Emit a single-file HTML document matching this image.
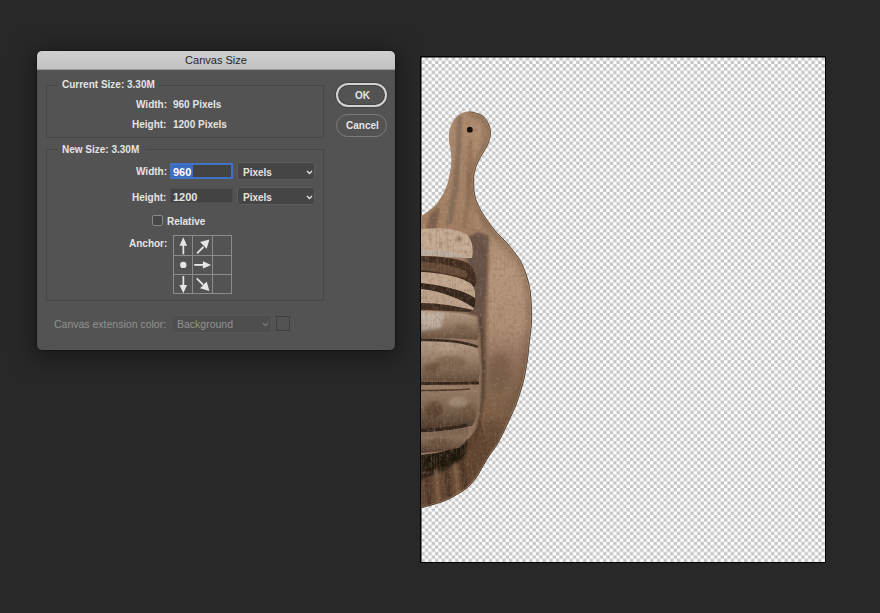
<!DOCTYPE html>
<html><head><meta charset="utf-8">
<style>
*{margin:0;padding:0;box-sizing:border-box}
html,body{width:880px;height:613px;overflow:hidden;background:#282828;font-family:"Liberation Sans",sans-serif}
.abs{position:absolute}
#dlg{position:absolute;left:36px;top:50px;width:360px;height:301px;border-radius:6px;background:#535353;border:1px solid #161616;overflow:hidden;box-shadow:0 4px 24px rgba(0,0,0,.5)}
#title{position:absolute;left:0;top:0;width:100%;height:19px;background:linear-gradient(#cfcfcf,#c2c2c2);border-bottom:1px solid #9c9c9c;color:#262626;font-size:11px;text-align:center;line-height:19px}
.grp{position:absolute;border:1px solid #474747}
.lbl{position:absolute;color:#e4e4e4;font-size:10px;font-weight:bold;white-space:nowrap;line-height:12px}
.inp{position:absolute;background:#434343;border:1px solid #4d4d4d}
.dd{position:absolute;background:#454545;border:1px solid #5c5c5c;border-radius:3px}
.chev{position:absolute;width:7px;height:5px}
</style></head><body>

<div id="dlg">
  <div id="title">Canvas Size</div>
</div>

<!-- Current size group -->
<div class="grp" style="left:46px;top:85px;width:278px;height:53px"></div>
<div class="abs" style="left:57px;top:79px;width:102px;height:12px;background:#535353"></div>
<div class="lbl" style="left:62px;top:79px">Current Size: 3.30M</div>
<div class="lbl" style="left:136px;top:99px">Width:</div>
<div class="lbl" style="left:173px;top:99px">960 Pixels</div>
<div class="lbl" style="left:132px;top:119px">Height:</div>
<div class="lbl" style="left:173px;top:119px">1200 Pixels</div>

<!-- New size group -->
<div class="grp" style="left:46px;top:149px;width:278px;height:152px"></div>
<div class="abs" style="left:57px;top:143px;width:89px;height:12px;background:#535353"></div>
<div class="lbl" style="left:62px;top:144px">New Size: 3.30M</div>

<div class="lbl" style="left:136px;top:166px">Width:</div>
<div class="inp" style="left:170px;top:163px;width:63px;height:16px;border:2px solid #3f72c6"></div>
<div class="abs" style="left:172px;top:165px;width:21px;height:12px;background:#3b6cbf"></div>
<div class="lbl" style="left:173px;top:166px;color:#fff;font-size:11px">960</div>
<div class="dd" style="left:237px;top:162px;width:78px;height:18px"></div>
<div class="lbl" style="left:243px;top:167px">Pixels</div>
<svg class="chev" style="left:305.5px;top:169.5px" viewBox="0 0 7 5"><path d="M1 1L3.5 3.6L6 1" fill="none" stroke="#e0e0e0" stroke-width="1.4"/></svg>

<div class="lbl" style="left:132px;top:192px">Height:</div>
<div class="inp" style="left:170px;top:188px;width:63px;height:15px"></div>
<div class="lbl" style="left:173px;top:191px;font-size:11px">1200</div>
<div class="dd" style="left:237px;top:187px;width:78px;height:18px"></div>
<div class="lbl" style="left:243px;top:192px">Pixels</div>
<svg class="chev" style="left:305.5px;top:194.5px" viewBox="0 0 7 5"><path d="M1 1L3.5 3.6L6 1" fill="none" stroke="#e0e0e0" stroke-width="1.4"/></svg>

<div class="abs" style="left:152px;top:215px;width:11px;height:11px;border:1px solid #888;border-radius:2px;background:#474747"></div>
<div class="lbl" style="left:167px;top:216px">Relative</div>
<div class="lbl" style="left:129px;top:238px">Anchor:</div>

<svg class="abs" style="left:170px;top:232px" width="66" height="66" viewBox="0 0 66 66">
  <g stroke="#8c8c8c" stroke-width="1" fill="none">
    <rect x="3.5" y="3.5" width="58" height="58"/>
    <line x1="22.5" y1="3.5" x2="22.5" y2="61.5"/>
    <line x1="42.5" y1="3.5" x2="42.5" y2="61.5"/>
    <line x1="3.5" y1="23.5" x2="61.5" y2="23.5"/>
    <line x1="3.5" y1="42.5" x2="61.5" y2="42.5"/>
  </g>
  <g fill="#e6e6e6" stroke="none">
    <!-- up -->
    <path d="M13.3 5.3L9.5 13.8H17.1Z"/><rect x="12.5" y="13" width="1.7" height="9.3"/>
    <!-- dot -->
    <circle cx="13.3" cy="32.9" r="3.2"/>
    <!-- right -->
    <path d="M41.1 32.9L32.9 29.2V36.6Z"/><rect x="24.2" y="32" width="9.5" height="1.8"/>
    <!-- down -->
    <path d="M13.3 61.3L9.5 52.9H17.1Z"/><rect x="12.5" y="44" width="1.7" height="9.5"/>
    <!-- up-right -->
    <path d="M39.4 7.4L36.7 16.7L30.1 10.1Z"/><path d="M26.4 20.7L32.9 14.2L34.2 15.5L27.7 22Z"/>
    <!-- down-right -->
    <path d="M39.4 58.9L30.1 56.2L36.7 49.6Z"/><path d="M27.4 45.7L33.9 52.2L32.6 53.5L26.1 47Z"/>
  </g>
</svg>

<div class="lbl" style="left:54px;top:318px;color:#929292;font-weight:normal;font-size:10.5px">Canvas extension color:</div>
<div class="dd" style="left:171px;top:315px;width:101px;height:18px;background:#4e4e4e;border-color:#575757"></div>
<div class="lbl" style="left:177px;top:318px;color:#929292;font-weight:normal;font-size:10.5px">Background</div>
<svg class="chev" style="left:262px;top:322px" viewBox="0 0 7 5"><path d="M1 1L3.5 3.6L6 1" fill="none" stroke="#7a7a7a" stroke-width="1.2"/></svg>
<div class="abs" style="left:276px;top:316px;width:14px;height:15px;border:1px solid #3f3f3f"></div>

<div class="abs" style="left:336px;top:83px;width:51px;height:24px;border:2px solid #d2d2d2;border-radius:12px;box-shadow:0 0 0 1px #444, inset 0 0 0 1px #444"></div>
<div class="lbl" style="left:355px;top:90px">OK</div>
<div class="abs" style="left:336px;top:114px;width:51px;height:23px;border:1px solid #7c7c7c;border-radius:12px"></div>
<div class="lbl" style="left:346px;top:120px">Cancel</div>

<svg class="abs" style="left:0;top:0;filter:saturate(1.25)" width="880" height="613" viewBox="0 0 880 613">
<defs>
<pattern id="chkp" x="421.63" y="57.3" width="6.72" height="6.73" patternUnits="userSpaceOnUse"><rect width="6.72" height="6.73" fill="#fff"/><rect x="3.36" width="3.36" height="3.365" fill="#c6c6c6"/><rect y="3.365" width="3.36" height="3.365" fill="#c6c6c6"/></pattern>
<clipPath id="cv"><rect x="421" y="57" width="404" height="505"/></clipPath>
<clipPath id="bd"><path d="M469.5 111.5C471.6 112.2 478.8 113.3 482.0 115.5C485.2 117.7 487.5 121.4 488.9 124.6C490.3 127.8 490.5 131.2 490.4 134.4C490.2 137.6 489.2 140.9 488.0 144.0C486.8 147.1 484.8 149.8 483.0 153.0C481.2 156.2 479.0 159.3 477.5 163.0C476.0 166.7 474.6 171.2 474.0 175.0C473.4 178.8 473.6 182.3 473.8 186.0C474.0 189.7 474.3 193.5 475.2 197.0C476.1 200.5 477.4 203.7 479.0 207.0C480.6 210.3 482.8 213.7 485.0 217.0C487.2 220.3 489.5 223.8 492.0 227.0C494.5 230.2 497.3 233.2 500.0 236.0C502.7 238.8 505.5 241.2 508.0 244.0C510.5 246.8 512.8 250.0 515.0 253.0C517.2 256.0 519.0 258.0 521.0 262.0C523.0 266.0 525.4 271.8 527.0 277.0C528.6 282.2 529.8 287.5 530.5 293.0C531.2 298.5 531.4 304.7 531.5 310.0C531.6 315.3 531.8 319.7 531.4 325.0C531.0 330.3 530.1 335.7 529.4 342.0C528.7 348.3 528.1 356.2 527.0 363.0C525.9 369.8 524.7 376.5 523.0 383.0C521.3 389.5 518.8 396.8 517.0 402.0C515.2 407.2 513.9 409.7 512.0 414.0C510.1 418.3 507.8 423.2 505.5 428.0C503.2 432.8 500.8 438.3 498.0 443.0C495.2 447.7 491.5 452.2 489.0 456.0C486.5 459.8 485.2 462.3 483.0 466.0C480.8 469.7 478.5 474.5 476.0 478.0C473.5 481.5 471.0 484.3 468.0 487.0C465.0 489.7 462.2 491.6 458.0 494.0C453.8 496.4 449.2 499.2 443.0 501.5C436.8 503.8 424.7 506.9 421.0 508.0L410 512L410 214L421 216C422.4 215.0 426.8 212.6 429.7 210.2C432.6 207.8 436.1 204.6 438.5 201.4C440.9 198.2 442.7 194.7 444.4 191.1C446.1 187.5 447.4 184.8 448.5 180.0C449.6 175.2 451.0 167.0 451.3 162.0C451.6 157.0 450.9 153.8 450.5 150.0C450.1 146.2 449.1 142.7 449.0 139.0C448.9 135.3 449.0 131.4 450.0 128.0C451.0 124.6 453.0 121.0 455.0 118.5C457.0 116.0 459.6 114.2 462.0 113.0C464.4 111.8 468.2 111.8 469.5 111.5Z"/></clipPath>
<linearGradient id="gboard" x1="0" y1="0" x2="0" y2="1">
<stop offset="0" stop-color="#ab8e76"/><stop offset="0.3" stop-color="#9c806a"/><stop offset="0.75" stop-color="#7a604c"/><stop offset="1" stop-color="#6a5240"/></linearGradient>
<linearGradient id="gright" x1="0" y1="0" x2="0" y2="1">
<stop offset="0" stop-color="#9c826c"/><stop offset="0.08" stop-color="#aa907b"/><stop offset="0.16" stop-color="#b29884"/><stop offset="0.36" stop-color="#a98f7b"/><stop offset="0.46" stop-color="#8e7464"/><stop offset="0.56" stop-color="#7e6854"/><stop offset="0.7" stop-color="#725a46"/><stop offset="0.85" stop-color="#644e3e"/><stop offset="1" stop-color="#584434"/></linearGradient>
<linearGradient id="gedge" x1="0" y1="0" x2="1" y2="0">
<stop offset="0" stop-color="#4e3c2f" stop-opacity="0"/><stop offset="1" stop-color="#4e3c2f" stop-opacity="0.7"/></linearGradient>
<linearGradient id="gloaf" x1="0" y1="0" x2="0" y2="1">
<stop offset="0" stop-color="#a89280"/><stop offset="0.5" stop-color="#917a68"/><stop offset="1" stop-color="#8a7362"/></linearGradient>
<filter id="nz1" x="0" y="0" width="100%" height="100%"><feTurbulence type="fractalNoise" baseFrequency="0.28" numOctaves="3" seed="4"/><feColorMatrix values="0 0 0 0 0.22  0 0 0 0 0.15  0 0 0 0 0.1  2.6 0 0 0 -1.3"/></filter>
<filter id="nz2" x="0" y="0" width="100%" height="100%"><feTurbulence type="fractalNoise" baseFrequency="0.3" numOctaves="3" seed="9"/><feColorMatrix values="0 0 0 0 0.86  0 0 0 0 0.76  0 0 0 0 0.66  2.6 0 0 0 -1.45"/></filter>
<filter id="nzg" x="0" y="0" width="100%" height="100%"><feTurbulence type="fractalNoise" baseFrequency="0.9 0.04" numOctaves="2" seed="2"/><feColorMatrix values="0 0 0 0 0.25  0 0 0 0 0.18  0 0 0 0 0.13  2.6 0 0 0 -1.3"/></filter>
<linearGradient id="gseg" x1="0" y1="0" x2="0" y2="1"><stop offset="0" stop-color="#b3a08f"/><stop offset="0.45" stop-color="#94806f"/><stop offset="1" stop-color="#5e4a3b"/></linearGradient>
<linearGradient id="gseg2" x1="0" y1="0" x2="0" y2="1"><stop offset="0" stop-color="#988270"/><stop offset="0.5" stop-color="#786655"/><stop offset="1" stop-color="#46362a"/></linearGradient>
<linearGradient id="gseg3" x1="0" y1="0" x2="0" y2="1"><stop offset="0" stop-color="#6e5e52"/><stop offset="0.4" stop-color="#85705e"/><stop offset="1" stop-color="#4a3a30"/></linearGradient>
<filter id="bl1" x="-20%" y="-20%" width="140%" height="140%"><feGaussianBlur stdDeviation="1.5"/></filter>
<filter id="bl3" x="-30%" y="-30%" width="160%" height="160%"><feGaussianBlur stdDeviation="3"/></filter>

</defs>
<rect x="420" y="56" width="406" height="507" fill="#000"/>
<rect x="421.5" y="57.5" width="403.5" height="504.5" fill="url(#chkp)"/>
<g clip-path="url(#cv)"><g clip-path="url(#bd)">
<rect x="415" y="105" width="125" height="410" fill="url(#gboard)"/>
<g filter="url(#bl1)">
<path d="M457 116L462 116L461 150L458 190L452 222L446 226L452 190L456 150Z" fill="#6a5e54" opacity="0.6"/>
<path d="M468 140L472 140L470 200L466 228L462 228L466 200Z" fill="#7a6250" opacity="0.5"/>
<path d="M476 118L482 125L480 160L478 200L482 228L476 228L472 200L474 160Z" fill="#b0957e" opacity="0.55"/>
<path d="M430 214L440 206L436 232L426 232Z" fill="#5a473a" opacity="0.6"/>
</g>
<g filter="url(#bl1)">
<path d="M479 222L545 222L545 515L468 515L484 440L488 330L489 250Z" fill="url(#gright)"/>
</g>
<path d="M469.5 111.5C471.6 112.2 478.8 113.3 482.0 115.5C485.2 117.7 487.5 121.4 488.9 124.6C490.3 127.8 490.5 131.2 490.4 134.4C490.2 137.6 489.2 140.9 488.0 144.0C486.8 147.1 484.8 149.8 483.0 153.0C481.2 156.2 479.0 159.3 477.5 163.0C476.0 166.7 474.6 171.2 474.0 175.0C473.4 178.8 473.6 182.3 473.8 186.0C474.0 189.7 474.3 193.5 475.2 197.0C476.1 200.5 477.4 203.7 479.0 207.0C480.6 210.3 482.8 213.7 485.0 217.0C487.2 220.3 489.5 223.8 492.0 227.0C494.5 230.2 497.3 233.2 500.0 236.0C502.7 238.8 505.5 241.2 508.0 244.0C510.5 246.8 512.8 250.0 515.0 253.0C517.2 256.0 519.0 258.0 521.0 262.0C523.0 266.0 525.4 271.8 527.0 277.0C528.6 282.2 529.8 287.5 530.5 293.0C531.2 298.5 531.4 304.7 531.5 310.0C531.6 315.3 531.8 319.7 531.4 325.0C531.0 330.3 530.1 335.7 529.4 342.0C528.7 348.3 528.1 356.2 527.0 363.0C525.9 369.8 524.7 376.5 523.0 383.0C521.3 389.5 518.8 396.8 517.0 402.0C515.2 407.2 513.9 409.7 512.0 414.0C510.1 418.3 507.8 423.2 505.5 428.0C503.2 432.8 500.8 438.3 498.0 443.0C495.2 447.7 491.5 452.2 489.0 456.0C486.5 459.8 485.2 462.3 483.0 466.0C480.8 469.7 478.5 474.5 476.0 478.0C473.5 481.5 471.0 484.3 468.0 487.0C465.0 489.7 462.2 491.6 458.0 494.0C453.8 496.4 449.2 499.2 443.0 501.5C436.8 503.8 424.7 506.9 421.0 508.0" fill="none" stroke="#4e3c2f" stroke-width="9" opacity="0.35" filter="url(#bl3)"/>
<g filter="url(#bl3)"><ellipse cx="500" cy="372" rx="12" ry="20" fill="#5e4a3a" opacity="0.45"/>
<path d="M484 420L500 420L495 470L478 480Z" fill="#4e3c2f" opacity="0.5"/></g>
<path d="M466 238L478 232L489 236L487 280L485 320L484 400L474 400L468 300Z" fill="#5e5046" opacity="0.95" filter="url(#bl1)"/>
<path d="M421 445L480 420L493 462L462 492L421 512Z" fill="#5a4434"/>
<g filter="url(#bl1)">
<path d="M421 451C440 451 455 448 468 440L464 458C450 468 438 474 421 480Z" fill="#1c1511"/>
<path d="M427 470L430 508M446 466L450 504M462 460L466 496" stroke="#3c2c22" stroke-width="3"/>
<path d="M436 470L439 506M455 464L459 500" stroke="#7e644e" stroke-width="3.4"/>
</g>
<path d="M421 229C440 227 458 229 466 234C472 239 474 248 472 258C460 258 440 256 421 256Z" fill="#c2ad9a"/>
<g filter="url(#bl1)"><circle cx="459" cy="239" r="1.8" fill="#4a3a2e"/><circle cx="441" cy="243" r="1.2" fill="#6a5646"/><circle cx="430" cy="236" r="1" fill="#6a5646"/><circle cx="450" cy="247" r="1" fill="#6a5646"/></g>
<path d="M421 249C435 249 450 251 466 255L471 258C455 258 440 256 421 256Z" fill="#b0b2b4" opacity="0.35"/>
<path d="M421 256C440 256 458 259 466 262C472 266 476 272 476.5 280C476.5 284 475 287 473.7 287C468 280 455 275 421 272Z" fill="#3b2b21"/>
<path d="M421 262C438 262 455 266 465 271C468 274 468 277 466 278C455 275 440 272 421 270Z" fill="#5f4a3a"/>
<path d="M421 272C445 273 462 278 470 283C474 286 476 292 474.8 298C465 291 448 286.5 421 283Z" fill="#bea995"/>
<path d="M421 283C448 286.5 465 291 474.8 298C476 302 475 306 473.7 308C462 300 445 292 421 289Z" fill="#30241c"/>
<path d="M421 289C445 292 462 300 473.7 308C474 309 473 310 472.5 310C455 306 440 304 421 304Z" fill="#b9a491"/>
<path d="M421 303C440 303 455 306 472.5 310L470 312C455 311.5 440 311 421 311Z" fill="#3a2b21"/>
<path d="M421 310C445 310 465 312 478 316C481.5 330 482 360 482 380C481.5 400 480 415 478 425C472 440 455 452 421 455Z" fill="#8e7766"/>
<path d="M421 311C445 311 466 313 477 318C480 325 480 333 477 340C460 338 440 338 421 339Z" fill="url(#gseg)"/>
<path d="M421 341C445 340 465 342 477 347C481 358 481 372 478 382C460 381 440 381 421 382Z" fill="url(#gseg)"/>
<path d="M421 386C445 385 462 386 476 390C479 402 478 418 472 426C455 428 440 429 421 429Z" fill="url(#gseg2)"/>
<path d="M421 433C440 432 455 430 468 428C470 435 466 444 458 448C445 451 435 452 421 453Z" fill="url(#gseg3)"/>
<g filter="url(#bl1)">
<path d="M421 313L444 313L441 328L421 331Z" fill="#d2cbc6" opacity="0.6"/>
<ellipse cx="450" cy="362" rx="16" ry="6" fill="#6a5545" opacity="0.55"/>
<ellipse cx="434" cy="410" rx="9" ry="9" fill="#4e3c2f" opacity="0.7"/>
<ellipse cx="458" cy="402" rx="10" ry="5" fill="#b3a496" opacity="0.5"/>
<ellipse cx="440" cy="442" rx="12" ry="4" fill="#5a4738" opacity="0.6"/>
<ellipse cx="432" cy="368" rx="8" ry="5" fill="#4e3c2f" opacity="0.5"/>
<ellipse cx="462" cy="328" rx="9" ry="4" fill="#6a5545" opacity="0.5"/>
<ellipse cx="468" cy="412" rx="6" ry="8" fill="#5a4636" opacity="0.45"/>
<ellipse cx="448" cy="350" rx="10" ry="3" fill="#c0b0a0" opacity="0.35"/>
</g>
<path d="M479 318C483 340 484 370 483 390C482 410 479 430 470 446" stroke="#4e3c30" stroke-width="3.5" fill="none" opacity="0.8" filter="url(#bl1)"/>
<path d="M421 340C445 339.5 465 342 478 347" stroke="#33261d" stroke-width="2.6" fill="none"/>
<path d="M421 383.5C440 383 460 383 479 383" stroke="#2e221b" stroke-width="3.2" fill="none"/>
<path d="M421 390.5C440 390.5 455 390 470 389" stroke="#4a382b" stroke-width="1.4" fill="none"/>
<path d="M421 430.5C440 430 455 428 468 425" stroke="#2e221b" stroke-width="3.4" fill="none"/>
<rect x="421" y="105" width="115" height="410" filter="url(#nzg)" opacity="0.35"/>
<rect x="421" y="105" width="115" height="410" filter="url(#nz1)" opacity="0.45"/>
<rect x="421" y="105" width="115" height="410" filter="url(#nz2)" opacity="0.18"/>
<circle cx="469.8" cy="129.7" r="2.9" fill="#141010"/>
<path d="M469.5 111.5C471.6 112.2 478.8 113.3 482.0 115.5C485.2 117.7 487.5 121.4 488.9 124.6C490.3 127.8 490.5 131.2 490.4 134.4C490.2 137.6 489.2 140.9 488.0 144.0C486.8 147.1 484.8 149.8 483.0 153.0C481.2 156.2 479.0 159.3 477.5 163.0C476.0 166.7 474.6 171.2 474.0 175.0C473.4 178.8 473.6 182.3 473.8 186.0C474.0 189.7 474.3 193.5 475.2 197.0C476.1 200.5 477.4 203.7 479.0 207.0C480.6 210.3 482.8 213.7 485.0 217.0C487.2 220.3 489.5 223.8 492.0 227.0C494.5 230.2 497.3 233.2 500.0 236.0C502.7 238.8 505.5 241.2 508.0 244.0C510.5 246.8 512.8 250.0 515.0 253.0C517.2 256.0 519.0 258.0 521.0 262.0C523.0 266.0 525.4 271.8 527.0 277.0C528.6 282.2 529.8 287.5 530.5 293.0C531.2 298.5 531.4 304.7 531.5 310.0C531.6 315.3 531.8 319.7 531.4 325.0C531.0 330.3 530.1 335.7 529.4 342.0C528.7 348.3 528.1 356.2 527.0 363.0C525.9 369.8 524.7 376.5 523.0 383.0C521.3 389.5 518.8 396.8 517.0 402.0C515.2 407.2 513.9 409.7 512.0 414.0C510.1 418.3 507.8 423.2 505.5 428.0C503.2 432.8 500.8 438.3 498.0 443.0C495.2 447.7 491.5 452.2 489.0 456.0C486.5 459.8 485.2 462.3 483.0 466.0C480.8 469.7 478.5 474.5 476.0 478.0C473.5 481.5 471.0 484.3 468.0 487.0C465.0 489.7 462.2 491.6 458.0 494.0C453.8 496.4 449.2 499.2 443.0 501.5C436.8 503.8 424.7 506.9 421.0 508.0" fill="none" stroke="#c8ab92" stroke-width="2.2" opacity="0.45"/>
</g>
<path d="M469.5 111.5C471.6 112.2 478.8 113.3 482.0 115.5C485.2 117.7 487.5 121.4 488.9 124.6C490.3 127.8 490.5 131.2 490.4 134.4C490.2 137.6 489.2 140.9 488.0 144.0C486.8 147.1 484.8 149.8 483.0 153.0C481.2 156.2 479.0 159.3 477.5 163.0C476.0 166.7 474.6 171.2 474.0 175.0C473.4 178.8 473.6 182.3 473.8 186.0C474.0 189.7 474.3 193.5 475.2 197.0C476.1 200.5 477.4 203.7 479.0 207.0C480.6 210.3 482.8 213.7 485.0 217.0C487.2 220.3 489.5 223.8 492.0 227.0C494.5 230.2 497.3 233.2 500.0 236.0C502.7 238.8 505.5 241.2 508.0 244.0C510.5 246.8 512.8 250.0 515.0 253.0C517.2 256.0 519.0 258.0 521.0 262.0C523.0 266.0 525.4 271.8 527.0 277.0C528.6 282.2 529.8 287.5 530.5 293.0C531.2 298.5 531.4 304.7 531.5 310.0C531.6 315.3 531.8 319.7 531.4 325.0C531.0 330.3 530.1 335.7 529.4 342.0C528.7 348.3 528.1 356.2 527.0 363.0C525.9 369.8 524.7 376.5 523.0 383.0C521.3 389.5 518.8 396.8 517.0 402.0C515.2 407.2 513.9 409.7 512.0 414.0C510.1 418.3 507.8 423.2 505.5 428.0C503.2 432.8 500.8 438.3 498.0 443.0C495.2 447.7 491.5 452.2 489.0 456.0C486.5 459.8 485.2 462.3 483.0 466.0C480.8 469.7 478.5 474.5 476.0 478.0C473.5 481.5 471.0 484.3 468.0 487.0C465.0 489.7 462.2 491.6 458.0 494.0C453.8 496.4 449.2 499.2 443.0 501.5C436.8 503.8 424.7 506.9 421.0 508.0" fill="none" stroke="#3a2c22" stroke-width="0.8" opacity="0.85"/>
</g></svg>


</body></html>
